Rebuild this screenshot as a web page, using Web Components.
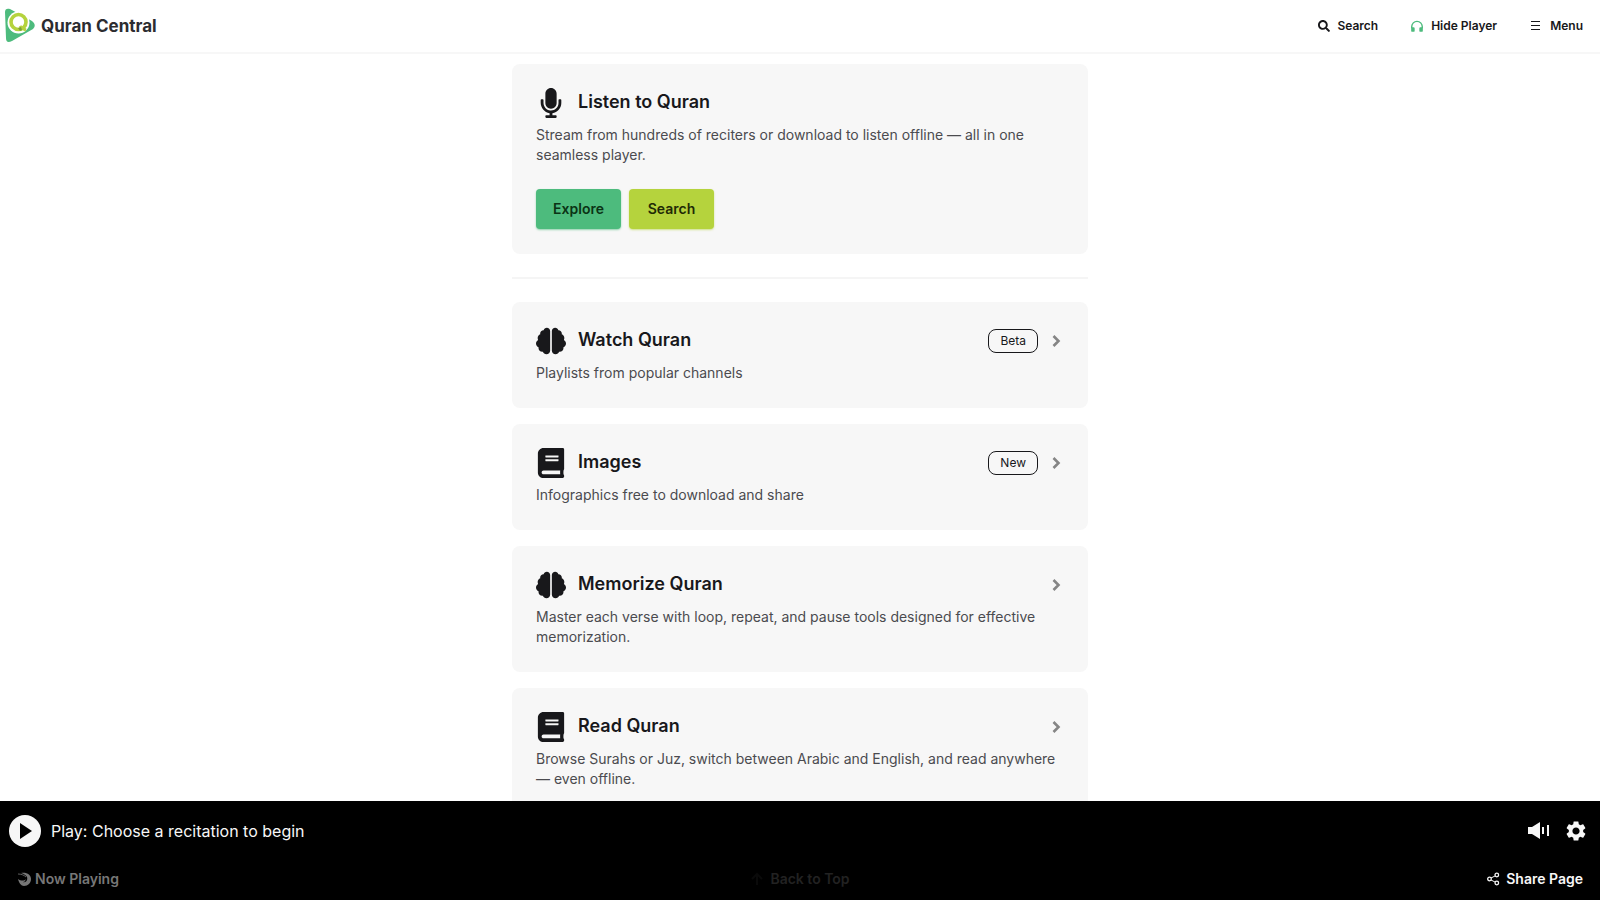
<!DOCTYPE html>
<html lang="en">
<head>
<meta charset="utf-8">
<meta name="viewport" content="width=device-width, initial-scale=1">
<title>Quran Central</title>
<style>
  body {
    margin: 0;
    background: #fff;
    color: #18181b;
    font-family: Inter, "Liberation Sans", sans-serif;
    font-size: 14px;
    line-height: 20px;
  }
</style>
</head>
<body>
<quran-app></quran-app>

<script>
const ICONS = {
  logo: ['0 0 32 36', `
    <path fill="#4dbb7d" d="M0 4C0 1 2 0 5 1L27 13Q32 17 28 21L7 33Q1 36 1 30Z"/>
    <circle cx="13.5" cy="14.5" r="11" fill="#fff"/>
    <circle cx="13.5" cy="14" r="7.5" fill="none" stroke="#b5d33d" stroke-width="3.6"/>
    <path fill="none" stroke="#b5d33d" stroke-width="3" d="M15 18q2 3 6 4"/>
    <path fill="#7fa03a" d="M13 20l3-1 1 3-2 1z"/>`],
  search: ['0 0 512 512', '<path d="M505 442.7L405.3 343c-4.5-4.5-10.6-7-17-7H372c27.6-35.3 44-79.7 44-128C416 93.1 322.9 0 208 0S0 93.1 0 208s93.1 208 208 208c48.3 0 92.7-16.4 128-44v16.3c0 6.4 2.5 12.5 7 17l99.7 99.7c9.4 9.4 24.6 9.4 33.9 0l28.3-28.3c9.4-9.4 9.4-24.6.1-34zM208 336c-70.7 0-128-57.2-128-128 0-70.7 57.2-128 128-128 70.7 0 128 57.2 128 128 0 70.7-57.2 128-128 128z"/>'],
  headphones: ['0 0 24 24', '<path fill="none" stroke="currentColor" stroke-width="2.4" d="M3 16v-3a9 9 0 0 1 18 0v3"/><path d="M2 14h4q2 0 2 2v4q0 2-2 2H4q-2 0-2-2zM22 14h-4q-2 0-2 2v4q0 2 2 2h2q2 0 2-2z"/>'],
  menu: ['0 0 14 14', '<path d="M2 2h9v1H2zM2 6h9v1H2zM2 10h9v1H2z"/>'],
  microphone: ['-80 0 512 512', '<path d="M176 352c53.02 0 96-42.98 96-96V96c0-53.02-42.98-96-96-96S80 42.98 80 96v160c0 53.02 42.98 96 96 96zm160-160h-16c-8.84 0-16 7.16-16 16v48c0 74.8-64.49 134.82-140.79 127.38C96.71 376.89 48 317.11 48 250.3V208c0-8.84-7.16-16-16-16H16c-8.84 0-16 7.16-16 16v40.16c0 89.64 63.97 169.55 152 181.69V464H96c-8.84 0-16 7.16-16 16v16c0 8.84 7.16 16 16 16h160c8.84 0 16-7.16 16-16v-16c0-8.84-7.16-16-16-16h-56v-33.77C285.71 418.47 352 344.9 352 256v-48c0-8.84-7.16-16-16-16z"/>'],
  brain: ['0 -32 576 576', '<path d="M208 0c-29.9 0-54.7 20.5-61.8 48.2-.8 0-1.4-.2-2.2-.2-35.3 0-64 28.7-64 64 0 4.8.6 9.5 1.7 14C52.5 138 32 166.6 32 200c0 12.6 3.2 24.3 8.3 34.9C16.3 248.7 0 274.3 0 304c0 33.3 20.4 61.9 49.4 73.9-.9 4.6-1.4 9.3-1.4 14.1 0 39.8 32.2 72 72 72 4.1 0 8.1-.5 12-1.2 9.6 28.5 36.2 49.2 68 49.2 39.8 0 72-32.2 72-72V64c0-35.3-28.7-64-64-64zm368 304c0-29.7-16.3-55.3-40.3-69.1 5.2-10.6 8.3-22.3 8.3-34.9 0-33.4-20.5-62-49.7-74 1-4.5 1.7-9.2 1.7-14 0-35.3-28.7-64-64-64-.8 0-1.5.2-2.2.2C422.7 20.5 397.9 0 368 0c-35.3 0-64 28.6-64 64v376c0 39.8 32.2 72 72 72 31.8 0 58.4-20.7 68-49.2 3.9.7 7.9 1.2 12 1.2 39.8 0 72-32.2 72-72 0-4.8-.5-9.5-1.4-14.1 29-12 49.4-40.6 49.4-73.9z"/>'],
  book: ['-32 0 512 512', '<path d="M448 360V24c0-13.3-10.7-24-24-24H96C43 0 0 43 0 96v320c0 53 43 96 96 96h328c13.3 0 24-10.7 24-24v-16c0-7.5-3.5-14.3-8.9-18.7-4.2-15.4-4.2-59.3 0-74.7 5.4-4.3 8.9-11.1 8.9-18.6zM128 134c0-3.3 2.7-6 6-6h212c3.3 0 6 2.7 6 6v20c0 3.3-2.7 6-6 6H134c-3.3 0-6-2.7-6-6v-20zm0 64c0-3.3 2.7-6 6-6h212c3.3 0 6 2.7 6 6v20c0 3.3-2.7 6-6 6H134c-3.3 0-6-2.7-6-6v-20zm253.4 250H96c-17.7 0-32-14.3-32-32 0-17.6 14.4-32 32-32h285.4c-1.9 17.1-1.9 46.9 0 64z"/>'],
  chevron: ['0 0 14 14', '<path fill="none" stroke="currentColor" stroke-width="2.6" d="M3.5 2l5 5-5 5"/>'],
  play: ['0 0 32 32', '<circle cx="16" cy="16" r="16" fill="#f7f7f7"/><path fill="#000" d="M11 8l12 8-12 8z"/>'],
  volume: ['0 0 24 20', '<path d="M2 6h4l8-5v17l-8-5H2zM16 6h2v7h-2zM21 4h2v11h-2z"/>'],
  settings: ['2 2 20 20', '<path d="M19.14 12.94c.04-.3.06-.61.06-.94 0-.32-.02-.64-.07-.94l2.03-1.58c.18-.14.23-.41.12-.61l-1.92-3.32c-.12-.22-.37-.29-.59-.22l-2.39.96c-.5-.38-1.03-.7-1.62-.94l-.36-2.54c-.04-.24-.24-.41-.48-.41h-3.84c-.24 0-.43.17-.47.41l-.36 2.54c-.59.24-1.13.57-1.62.94l-2.39-.96c-.22-.08-.47 0-.59.22L2.74 8.87c-.12.21-.08.47.12.61l2.03 1.58c-.05.3-.09.63-.09.94s.02.64.07.94l-2.03 1.58c-.18.14-.23.41-.12.61l1.92 3.32c.12.22.37.29.59.22l2.39-.96c.5.38 1.03.7 1.62.94l.36 2.54c.05.24.24.41.48.41h3.84c.24 0 .44-.17.47-.41l.36-2.54c.59-.24 1.13-.56 1.62-.94l2.39.96c.22.08.47 0 .59-.22l1.92-3.32c.12-.22.07-.47-.12-.61l-2.01-1.58zM12 15.6c-1.98 0-3.6-1.62-3.6-3.6s1.62-3.6 3.6-3.6 3.6 1.62 3.6 3.6-1.62 3.6-3.6 3.6z"/>'],
  swirl: ['0 0 14 14', '<path d="M1 7c3 2 6 2 8 0-1 2-1 3-3 3 3 1 5-2 4-5-1-2-3-3-6-4 6-1 10 2 10 6s-3 7-7 7c-3 0-5-3-6-7z"/><path fill="none" stroke="currentColor" stroke-width=".8" d="M1 2c3 0 6 1 8 3"/>'],
  arrow: ['0 0 14 14', '<path fill="none" stroke="currentColor" stroke-width="2" d="M7 13V2M2 7l5-5 5 5"/>'],
  share: ['0 0 14 14', '<path fill="none" stroke="currentColor" d="M5 6l4-2M5 8l4 2"/><g fill="none" stroke="currentColor" stroke-width="1.3"><circle cx="3.5" cy="7" r="1.8"/><circle cx="10.8" cy="3" r="1.8"/><circle cx="10.8" cy="11" r="1.8"/></g>']
}

class AppIcon extends HTMLElement {
  constructor () {
    super()
    this.shadow = this.attachShadow({ mode: 'open' })
  }

  connectedCallback () {
    const [viewBox, shapes] = ICONS[this.getAttribute('name')]
    this.shadow.innerHTML = `
      <style>
      :host {
        display: inline-block;
        flex: none;
        width: 14px;
        height: 14px;
      }

      svg {
        display: block;
        width: 100%;
        height: 100%;
      }
      </style>
      <svg viewBox="${viewBox}" fill="currentColor" aria-hidden="true">${shapes}</svg>
      `
  }
}

class SiteHeader extends HTMLElement {
  constructor () {
    super()
    this.shadow = this.attachShadow({ mode: 'open' })
    this.shadow.innerHTML = `
      <style>
      :host {
        display: flex;
        align-items: center;
        justify-content: space-between;
        height: 52px;
        padding: 0 17px 0 5px;
        border-bottom: 2px solid #f7f7f7;
      }

      .brand {
        display: flex;
        align-items: center;
        gap: 4px;
        color: #2c2c30;
        font-size: 17px;
        font-weight: 700;
        text-decoration: none;
      }

      .brand app-icon {
        width: 32px;
        height: 36px;
      }

      nav {
        display: flex;
        gap: 32px;
      }

      button {
        display: flex;
        align-items: center;
        gap: 7px;
        padding: 0;
        border: 0;
        background: none;
        color: inherit;
        font: 600 12px/20px Inter, "Liberation Sans", sans-serif;
        cursor: pointer;
      }

      .search {
        width: 12px;
        height: 12px;
      }

      .green {
        color: #4dbb7d;
      }
      </style>

      <a class="brand" href="#"><app-icon name="logo"></app-icon>Quran Central</a>
      <nav>
        <button type="button"><app-icon class="search" name="search"></app-icon>Search</button>
        <button type="button"><app-icon class="green" name="headphones"></app-icon>Hide Player</button>
        <button type="button"><app-icon name="menu"></app-icon>Menu</button>
      </nav>
      `
  }
}

class FeatureCard extends HTMLElement {
  constructor () {
    super()
    this.shadow = this.attachShadow({ mode: 'open' })
  }

  connectedCallback () {
    const badge = this.getAttribute('badge')
    this.shadow.innerHTML = `
      <style>
      :host {
        display: block;
        padding: 24px 24px 25px;
        border-radius: 8px;
        background: #f7f7f7;
      }

      .head {
        display: flex;
        align-items: center;
        gap: 12px;
        height: 30px;
        margin-bottom: 7px;
      }

      .head > app-icon {
        width: 30px;
        height: 30px;
      }

      h2 {
        flex: 1;
        align-self: flex-start;
        margin: 0;
        font-size: 18px;
        font-weight: 600;
        line-height: 28px;
      }

      h2 a {
        color: inherit;
        text-decoration: none;
      }

      .badge {
        padding: 0 11px;
        border: 1px solid #18181b;
        border-radius: 8px;
        font-size: 12px;
        line-height: 22px;
      }

      .head .chevron {
        width: 14px;
        height: 14px;
        color: #858585;
      }

      p {
        margin: 0;
        color: #4b4b4f;
      }
      </style>

      <div class="head">
        <app-icon name="${this.getAttribute('icon')}"></app-icon>
        <h2><a href="#">${this.getAttribute('heading')}</a></h2>
        ${badge ? `<span class="badge">${badge}</span>` : ''}
        ${this.hasAttribute('plain') ? '' : '<app-icon class="chevron" name="chevron"></app-icon>'}
      </div>
      <p><slot></slot></p>
      <slot name="actions"></slot>
      `
  }
}

class PlayerBar extends HTMLElement {
  constructor () {
    super()
    this.shadow = this.attachShadow({ mode: 'open' })
    this.shadow.innerHTML = `
      <style>
      :host {
        display: block;
        padding-bottom: 3px;
        background: #000;
        color: #f7f7f7;
      }

      .controls {
        display: flex;
        align-items: center;
        gap: 16px;
        height: 60px;
        padding: 0 14px 0 9px;
      }

      .links {
        display: grid;
        grid-template-columns: 1fr auto 1fr;
        align-items: center;
        height: 36px;
        padding: 0 17px;
      }

      button, a {
        display: flex;
        align-items: center;
        gap: 6px;
        padding: 0;
        border: 0;
        background: none;
        color: inherit;
        font: 600 14px/20px Inter, "Liberation Sans", sans-serif;
        text-decoration: none;
      }

      .play {
        flex: 1;
        gap: 10px;
        font-size: 16px;
        font-weight: 400;
      }

      .play app-icon {
        width: 32px;
        height: 32px;
      }

      .volume {
        width: 24px;
        height: 20px;
      }

      .settings {
        width: 20px;
        height: 20px;
      }

      .now {
        gap: 4px;
        color: #777;
      }

      .top {
        color: #222;
      }

      .top app-icon {
        color: #0a0a0a;
      }

      .share {
        justify-self: end;
      }
      </style>

      <div class="controls">
        <button class="play" type="button"><app-icon name="play"></app-icon>Play: Choose a recitation to begin</button>
        <button type="button" aria-label="Volume"><app-icon class="volume" name="volume"></app-icon></button>
        <button type="button" aria-label="Settings"><app-icon class="settings" name="settings"></app-icon></button>
      </div>
      <div class="links">
        <a class="now" href="#"><app-icon name="swirl"></app-icon>Now Playing</a>
        <a class="top" href="#"><app-icon name="arrow"></app-icon>Back to Top</a>
        <button class="share" type="button"><app-icon name="share"></app-icon>Share Page</button>
      </div>
      `
  }
}

class QuranApp extends HTMLElement {
  constructor () {
    super()
    this.shadow = this.attachShadow({ mode: 'open' })
    this.shadow.innerHTML = `
      <style>
      :host {
        display: grid;
        grid-template-rows: auto minmax(0, 1fr) auto;
        height: 100vh;
      }

      main {
        overflow-y: auto;
        scrollbar-width: none;
      }

      .column {
        display: flex;
        flex-direction: column;
        gap: 16px;
        max-width: 576px;
        margin: 0 auto;
        padding: 10px 0 24px;
      }

      hr {
        width: 100%;
        height: 2px;
        margin: 7px 0;
        border: 0;
        background: #f5f5f5;
      }

      .actions {
        display: flex;
        gap: 8px;
        margin-top: 24px;
      }

      .actions a {
        width: 85px;
        border-radius: 4px;
        background: #4dbb7d;
        box-shadow: 0 1px 2px #4dbb7d99;
        color: #0b3315;
        font-size: 14px;
        font-weight: 600;
        line-height: 40px;
        text-align: center;
        text-decoration: none;
      }

      .actions .lime {
        background: #b5d33d;
        box-shadow: 0 1px 2px #b5d33d99;
        color: #1f2a05;
      }
      </style>

      <site-header></site-header>
      <main>
        <div class="column">
          <feature-card icon="microphone" heading="Listen to Quran" plain>
            Stream from hundreds of reciters or download to listen offline — all in one seamless player.
            <div class="actions" slot="actions">
              <a href="#">Explore</a>
              <a class="lime" href="#">Search</a>
            </div>
          </feature-card>
          <hr>
          <feature-card icon="brain" heading="Watch Quran" badge="Beta">Playlists from popular channels</feature-card>
          <feature-card icon="book" heading="Images" badge="New">Infographics free to download and share</feature-card>
          <feature-card icon="brain" heading="Memorize Quran">Master each verse with loop, repeat, and pause tools designed for effective memorization.</feature-card>
          <feature-card icon="book" heading="Read Quran">Browse Surahs or Juz, switch between Arabic and English, and read anywhere — even offline.</feature-card>
        </div>
      </main>
      <player-bar></player-bar>
      `
  }
}

customElements.define('app-icon', AppIcon)
customElements.define('site-header', SiteHeader)
customElements.define('feature-card', FeatureCard)
customElements.define('player-bar', PlayerBar)
customElements.define('quran-app', QuranApp)
</script>
</body>
</html>
